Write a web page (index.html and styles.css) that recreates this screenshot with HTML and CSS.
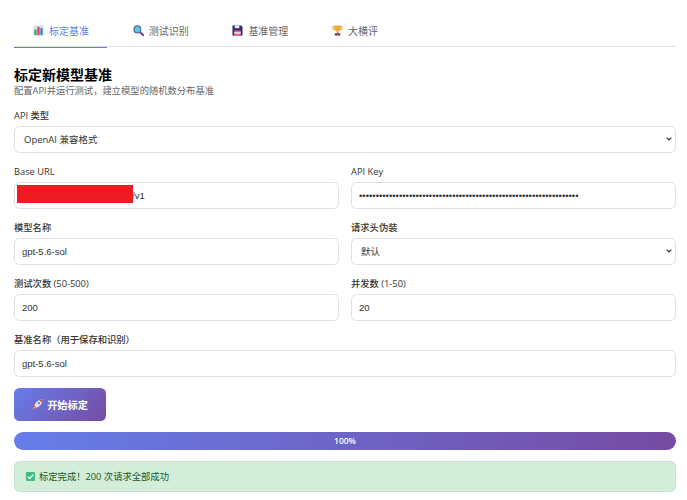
FILE: index.html
```html
<!DOCTYPE html>
<html lang="en">
<head>
    <meta charset="UTF-8">
    <meta name="viewport" content="width=device-width, initial-scale=1.0">
    <title>标定基准</title>
    <link rel="stylesheet" href="styles.css">
</head>
<body>
    <nav class="tabs">
        <a class="tab active">
            <svg class="emoji" viewBox="0 0 12 12"><rect x="0.5" y="0.5" width="11" height="11" fill="#d8dde0"/><rect x="1.5" y="5" width="2.4" height="6" fill="#3aa757"/><rect x="4.8" y="2" width="2.4" height="9" fill="#d9376e"/><rect x="8.1" y="3.5" width="2.4" height="7.5" fill="#2f7fd6"/></svg>
            标定基准
        </a>
        <a class="tab">
            <svg class="emoji" viewBox="0 0 12 12"><path d="M7.5 7.5L11 11" stroke="#6b3f8f" stroke-width="2.2" stroke-linecap="round"/><circle cx="4.8" cy="4.8" r="3.8" fill="#5cc4e6" stroke="#4a6d8c" stroke-width="1.2"/></svg>
            测试识别
        </a>
        <a class="tab">
            <svg class="emoji" viewBox="0 0 12 12"><path d="M0.5 0.5H10L11.5 2V11.5H0.5Z" fill="#2f2f6b"/><rect x="2.5" y="6" width="7" height="5.5" fill="#f06292"/><rect x="2.5" y="7.8" width="7" height="1.6" fill="#f4e6ee"/><rect x="3" y="0.5" width="5" height="3" fill="#e8e8f4"/></svg>
            基准管理
        </a>
        <a class="tab">
            <svg class="emoji" viewBox="0 0 12 12"><path d="M1 1.5H3V5H2C1 5 .7 3.5 1 1.5ZM11 1.5H9V5H10C11 5 11.3 3.5 11 1.5Z" fill="none" stroke="#d89a2b"/><path d="M2.8 .5H9.2V3.5C9.2 6 7.5 7 6 7C4.5 7 2.8 6 2.8 3.5Z" fill="#f0ad33"/><rect x="5.1" y="7" width="1.8" height="2" fill="#c9862a"/><rect x="3" y="9" width="6" height="2.5" fill="#7a3b4a"/></svg>
            大横评
        </a>
    </nav>

    <main>
        <h2>标定新模型基准</h2>
        <p class="subtitle">配置API并运行测试，建立模型的随机数分布基准</p>

        <div class="field">
            <label>API 类型</label>
            <select>
                <option>OpenAI 兼容格式</option>
            </select>
        </div>

        <div class="row">
            <div class="field">
                <label>Base URL</label>
                <div class="redacted-wrap">
                    <input class="url-input" type="text" value="/v1">
                    <span class="redacted"></span>
                </div>
            </div>
            <div class="field">
                <label>API Key</label>
                <input class="key-input" type="password" value="sk-aaaaaaaaaaaaaaaaaaaaaaaaaaaaaaaaaaaaaaaaaaaaaaaaaaaaaaaaaaaaaaa">
            </div>
        </div>

        <div class="row">
            <div class="field">
                <label>模型名称</label>
                <input type="text" value="gpt-5.6-sol">
            </div>
            <div class="field">
                <label>请求头伪装</label>
                <select>
                    <option>默认</option>
                </select>
            </div>
        </div>

        <div class="row">
            <div class="field">
                <label>测试次数 (50-500)</label>
                <input type="text" value="200">
            </div>
            <div class="field">
                <label>并发数 (1-50)</label>
                <input type="text" value="20">
            </div>
        </div>

        <div class="field">
            <label>基准名称（用于保存和识别）</label>
            <input type="text" value="gpt-5.6-sol">
        </div>

        <button class="start-btn">
            <svg class="emoji" viewBox="0 0 12 12"><path d="M11.5 .5C7.5 .5 4 3 2.500 7L5 9.500C9 8 11.500 4.500 11.500 .5Z" fill="#dfe3ec"/><path d="M11.500 .5C10.300 .5 9.200 .7 8 1.200L10.800 4C11.300 2.800 11.500 1.700 11.500 .5Z" fill="#e0483e"/><circle cx="7.500" cy="4.500" r="1.200" fill="#3f8fd6"/><path d="M3.500 4.500L.5 5.500L2 7.500ZM7.500 8.500L6.500 11.500L4.500 10Z" fill="#d9534f"/><path d="M2.500 8L.5 11.500L4 9.500Z" fill="#f0ad33"/></svg>
            开始标定
        </button>

        <div class="progress">100%</div>

        <div class="alert">
            <svg class="emoji" viewBox="0 0 12 12"><rect x="1" y="1" width="10" height="10" rx="1.2" fill="#3fbf7f"/><path d="M3 6.2L5.200 8.300L9 3.900" fill="none" stroke="#fff" stroke-width="1.5"/></svg>
            标定完成！200 次请求全部成功
        </div>
    </main>
</body>
</html>
```

FILE: styles.css
```css
* {
    box-sizing: border-box;
    margin: 0;
    padding: 0;
}

body {
    font-family: "Open Sans", "Noto Sans CJK SC", sans-serif;
    background-color: #fff;
    color: #333;
    padding: 14px 11px 0 14px;
}

.tabs {
    display: flex;
    gap: 6.7px;
    border-bottom: 1.5px solid #e0e0e0;
    margin-bottom: 20px;
}

.tab {
    display: flex;
    align-items: center;
    gap: 5px;
    height: 33.5px;
    margin-bottom: -1.5px;
    padding: 0 18px 0 19px;
    border-bottom: 1.5px solid transparent;
    font-size: 10px;
    color: #666;
}

.tab.active {
    color: #667eea;
    border-bottom-color: #667eea;
}

.emoji {
    width: 11px;
    height: 11px;
    flex: none;
}

h2 {
    font-size: 14px;
    line-height: 16px;
    margin-bottom: 1.5px;
    color: #000;
}

.subtitle {
    font-size: 9.3px;
    line-height: 12px;
    color: #666;
    margin-bottom: 11px;
}

.row {
    display: grid;
    grid-template-columns: 1fr 1fr;
    gap: 12px;
}

.field {
    margin-bottom: 11px;
}

label {
    display: block;
    font-size: 9.3px;
    line-height: 15px;
    font-weight: 500;
    color: #333;
    margin-bottom: 3px;
}

input,
select {
    display: block;
    width: 100%;
    height: 27px;
    padding: 0 7px;
    border: 1.5px solid #e0e0e0;
    border-radius: 5.5px;
    background-color: #fff;
    color: #333;
    font-family: "Liberation Sans", "Noto Sans CJK SC", sans-serif;
    font-size: 9.5px;
}

select {
    appearance: none;
    padding-left: 9px;
    font-family: "Open Sans", "Noto Sans CJK SC", sans-serif;
    background-image: url("data:image/svg+xml,%3Csvg xmlns='http://www.w3.org/2000/svg' width='6' height='4'%3E%3Cpath d='M.7.7L3 3 5.300.7' fill='none' stroke='%23333' stroke-width='1.200'/%3E%3C/svg%3E");
    background-repeat: no-repeat;
    background-position: right 3px center;
}

.redacted-wrap {
    position: relative;
}

.url-input {
    padding-left: 117px;
}

.redacted {
    position: absolute;
    left: 3px;
    top: 3.7px;
    width: 116px;
    height: 17.5px;
    background-color: #ed1c24;
}

.start-btn {
    display: flex;
    align-items: center;
    justify-content: center;
    gap: 4px;
    width: 92px;
    height: 33px;
    border: none;
    border-radius: 5.5px;
    background: linear-gradient(135deg, #667eea, #764ba2);
    color: #fff;
    font-family: "Open Sans", "Noto Sans CJK SC", sans-serif;
    font-size: 10.2px;
    font-weight: 700;
}

.progress {
    height: 18px;
    margin-top: 11px;
    border-radius: 9px;
    background: linear-gradient(90deg, #667eea, #764ba2);
    color: #fff;
    font-size: 8.5px;
    font-weight: 600;
    line-height: 18px;
    text-align: center;
}

.alert {
    display: flex;
    align-items: center;
    gap: 3px;
    height: 31px;
    margin-top: 11px;
    padding: 0 10px;
    border: 1px solid #c3e6cb;
    border-radius: 5.5px;
    background-color: #d4edda;
    color: #155724;
    font-size: 9.3px;
}
```
